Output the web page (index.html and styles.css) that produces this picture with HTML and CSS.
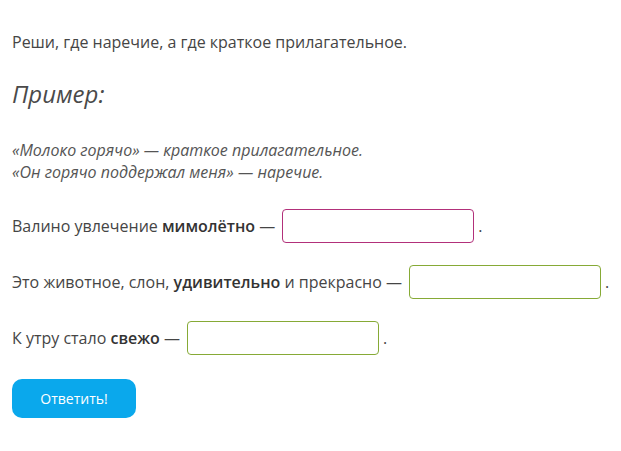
FILE: index.html
```html
<!DOCTYPE html>
<html lang="ru">
<head>
    <meta charset="UTF-8">
    <title>Наречие или краткое прилагательное</title>
    <link rel="stylesheet" href="styles.css">
</head>
<body>
    <div class="task">
        <p class="intro">Реши, где наречие, а где краткое прилагательное.</p>

        <h3 class="example-title">Пример:</h3>

        <p class="example">
            «Молоко горячо» — краткое прилагательное.<br>
            «Он горячо поддержал меня» — наречие.
        </p>

        <div class="row">
            <span class="text">Валино увлечение <b>мимолётно</b> —</span>
            <input type="text" class="answer wrong">
            <span class="dot">.</span>
        </div>

        <div class="row">
            <span class="text">Это животное, слон, <b>удивительно</b> и прекрасно —</span>
            <input type="text" class="answer right">
            <span class="dot">.</span>
        </div>

        <div class="row">
            <span class="text">К утру стало <b>свежо</b> —</span>
            <input type="text" class="answer right">
            <span class="dot">.</span>
        </div>

        <button class="submit">Ответить!</button>
    </div>
</body>
</html>
```

FILE: styles.css
```css
body {
    margin: 0;
    font-family: "Open Sans", Arial, sans-serif;
    color: #454545;
    background: #fff;
}

.task {
    padding: 31px 12px 0;
}

.intro {
    margin: 0;
    font-size: 16px;
    line-height: 22px;
}

.example-title {
    margin: 24px 0 0;
    font-size: 24px;
    font-weight: normal;
    font-style: italic;
    line-height: 34px;
    color: #4a4a4a;
}

.example {
    margin: 28px 0 0;
    font-size: 16px;
    font-style: italic;
    line-height: 22px;
    color: #555;
}

.row {
    display: flex;
    align-items: center;
    margin-top: 22px;
    font-size: 16px;
    line-height: 22px;
    white-space: nowrap;
}

.example + .row {
    margin-top: 26px;
}

.row .text {
    flex-shrink: 0;
    margin-right: 7px;
}

.row b {
    font-weight: 600;
    color: #333;
}

.answer {
    flex-shrink: 0;
    width: 192px;
    height: 34px;
    box-sizing: border-box;
    border: 1px solid #aaa;
    border-radius: 4px;
    background: #fff;
    margin: 0;
    padding: 0 8px;
}

.answer.wrong {
    border-color: #b2307a;
}

.answer.right {
    border-color: #86aa36;
}

.dot {
    margin-left: 4px;
}

.submit {
    display: block;
    margin-top: 24px;
    width: 124px;
    height: 39px;
    border: none;
    border-radius: 10px;
    background-color: #0aa8ec;
    color: #fff;
    font-family: "Open Sans", Arial, sans-serif;
    font-size: 14px;
    cursor: pointer;
}
```
